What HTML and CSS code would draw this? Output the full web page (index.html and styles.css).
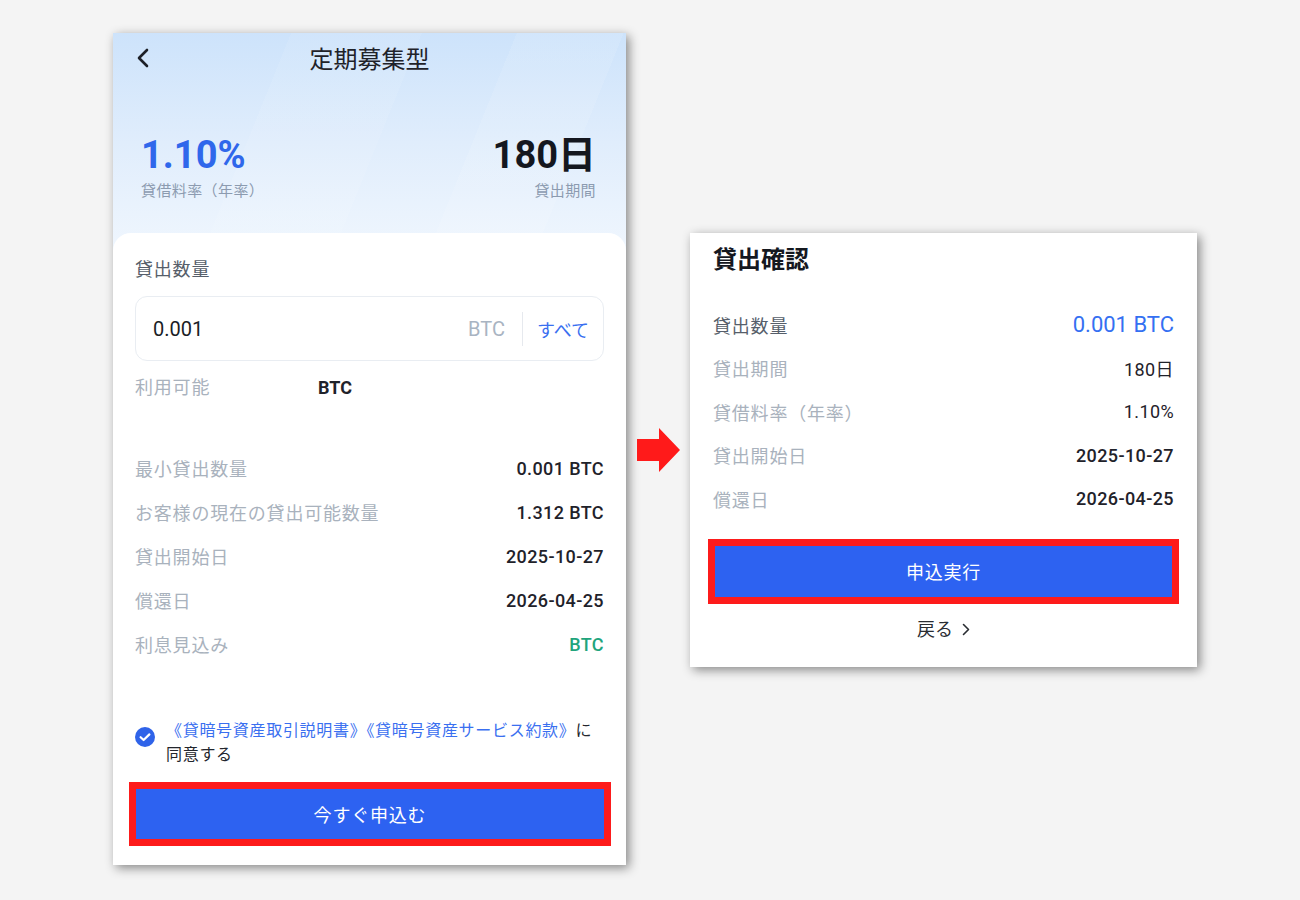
FILE: index.html
```html
<!DOCTYPE html>
<html lang="ja">
  <head>
    <meta charset="UTF-8" />
    <meta name="viewport" content="width=device-width, initial-scale=1.0" />
    <title>定期募集型</title>
    <link rel="stylesheet" href="styles.css">
  </head>
  <body>
    <div class="stage">
      <section class="phone">
        <header class="phone-head">
          <div class="nav">
            <svg class="back" width="12" height="20" viewBox="0 0 12 20">
              <polyline points="10,2 2,10 10,18" fill="none" stroke="#1d2027" stroke-width="2.6" stroke-linecap="round" stroke-linejoin="round" />
            </svg>
            <h1 class="nav-title">定期募集型</h1>
            <span></span>
          </div>
          <div class="stats">
            <div class="stat">
              <div class="stat-value rate">1.10%</div>
              <div class="stat-label">貸借料率（年率）</div>
            </div>
            <div class="stat stat-right">
              <div class="stat-value">180日</div>
              <div class="stat-label">貸出期間</div>
            </div>
          </div>
        </header>

        <div class="sheet">
          <div class="field-label">貸出数量</div>
          <div class="amount-box">
            <span class="amount">0.001</span>
            <span class="unit">BTC</span>
            <span class="divider"></span>
            <span class="all">すべて</span>
          </div>
          <div class="avail">
            <span class="avail-label">利用可能</span>
            <span class="avail-value">BTC</span>
          </div>

          <dl class="details">
            <div class="row"><dt>最小貸出数量</dt><dd>0.001 BTC</dd></div>
            <div class="row"><dt>お客様の現在の貸出可能数量</dt><dd>1.312 BTC</dd></div>
            <div class="row"><dt>貸出開始日</dt><dd>2025-10-27</dd></div>
            <div class="row"><dt>償還日</dt><dd>2026-04-25</dd></div>
            <div class="row"><dt>利息見込み</dt><dd class="green">BTC</dd></div>
          </dl>

          <div class="agree">
            <svg class="check" width="20" height="20" viewBox="0 0 20 20">
              <circle cx="10" cy="10" r="10" fill="#2f63e9" />
              <polyline points="5.6,10.2 8.6,13 14.4,7.4" fill="none" stroke="#fff" stroke-width="2.2" stroke-linecap="round" stroke-linejoin="round" />
            </svg>
            <p class="agree-text"><span class="link">《貸暗号資産取引説明書》《貸暗号資産サービス約款》</span>に<br>同意する</p>
          </div>

          <div class="mark mark-left">
            <button class="primary">今すぐ申込む</button>
          </div>
        </div>
      </section>

      <svg class="arrow" width="44" height="44" viewBox="0 0 44 44">
        <polygon points="0,11 22,11 22,0 43,22 22,44 22,33 0,33" fill="#ff1a1a" />
      </svg>

      <section class="confirm">
        <h2 class="confirm-title">貸出確認</h2>
        <dl class="details confirm-details">
          <div class="row"><dt class="dark">貸出数量</dt><dd class="blue">0.001 BTC</dd></div>
          <div class="row"><dt>貸出期間</dt><dd class="regular">180日</dd></div>
          <div class="row"><dt>貸借料率（年率）</dt><dd class="regular">1.10%</dd></div>
          <div class="row"><dt>貸出開始日</dt><dd>2025-10-27</dd></div>
          <div class="row"><dt>償還日</dt><dd>2026-04-25</dd></div>
        </dl>
        <div class="mark mark-right">
          <button class="primary">申込実行</button>
        </div>
        <div class="go-back">
          戻る
          <svg width="8" height="13" viewBox="0 0 8 13">
            <polyline points="1.5,1.5 6.5,6.5 1.5,11.5" fill="none" stroke="#2a2d33" stroke-width="1.6" stroke-linecap="round" stroke-linejoin="round" />
          </svg>
        </div>
      </section>
    </div>
  </body>
</html>
```

FILE: styles.css
```css
body {
  margin: 0;
  background: #f4f4f4;
  font-family: Roboto, "Noto Sans CJK JP", sans-serif;
  color: #1f222a;
}
.stage {
  display: flex;
  align-items: flex-start;
  padding: 33px 0 0 113px;
  height: 867px;
}

/* phone screen */
.phone {
  width: 513px;
  background: linear-gradient(180deg, #cde3fb 0px, #e0edfc 110px, #f1f7fe 230px, #f4f8fe 260px);
  box-shadow: 3px 3px 10px rgba(0, 0, 0, 0.45);
}
.phone-head {
  height: 200px;
  box-sizing: border-box;
  background:
    linear-gradient(112deg, transparent 30%, rgba(255, 255, 255, 0.08) 30%, rgba(255, 255, 255, 0.08) 52%, transparent 52%),
    linear-gradient(112deg, transparent 68%, rgba(255, 255, 255, 0.1) 68%, rgba(255, 255, 255, 0.1) 86%, transparent 86%);
}
.nav {
  display: grid;
  grid-template-columns: 1fr auto 1fr;
  align-items: center;
  height: 54px;
  padding-left: 24px;
  padding-right: 24px;
}
.back {
  margin-top: -4px;
}
.nav-title {
  margin: 0;
  font-size: 24px;
  font-weight: 400;
  line-height: 32px;
  color: #1f2229;
}
.stats {
  display: flex;
  justify-content: space-between;
  padding: 46px 30px 0 28px;
}
.stat-right {
  text-align: right;
}
.stat-value {
  font-size: 38px;
  font-weight: 700;
  line-height: 44px;
  color: #14171f;
}
.stat-value.rate {
  color: #2f67eb;
}
.stat-label {
  margin-top: 3px;
  font-size: 15px;
  line-height: 22px;
  letter-spacing: 0.4px;
  color: #8c9bb0;
}

/* white sheet */
.sheet {
  background: #fff;
  border-radius: 18px 18px 0 0;
  padding: 24px 22px 19px;
}
.field-label {
  font-size: 18px;
  line-height: 26px;
  letter-spacing: 0.8px;
  color: #565e6a;
}
.amount-box {
  display: flex;
  align-items: center;
  height: 65px;
  box-sizing: border-box;
  margin-top: 13px;
  padding: 0 14px 0 17px;
  border: 1px solid #e9edf2;
  border-radius: 12px;
}
.amount {
  flex: 1;
  font-size: 20px;
  color: #1a1d26;
}
.unit {
  font-size: 20px;
  color: #a9b4c2;
  margin-right: 17px;
}
.divider {
  width: 1px;
  height: 34px;
  background: #e6e9ee;
}
.all {
  margin-left: 14px;
  font-size: 18px;
  color: #3a6ff0;
}
.avail {
  display: flex;
  margin-top: 14px;
  line-height: 26px;
}
.avail-label {
  width: 183px;
  font-size: 18px;
  letter-spacing: 0.8px;
  color: #a9b2bd;
}
.avail-value {
  font-size: 18px;
  font-weight: 700;
}

.details {
  margin: 45px 0 0;
}
.row {
  display: flex;
  justify-content: space-between;
  align-items: center;
  height: 44px;
}
.row dt {
  font-size: 18px;
  letter-spacing: 0.8px;
  color: #a9b2bd;
}
.row dt.dark {
  color: #565e6a;
}
.row dd {
  margin: 0;
  font-size: 18px;
  font-weight: 500;
  letter-spacing: 0.4px;
  color: #1f222a;
}
.row dd.green {
  color: #21a47c;
}
.row dd.regular {
  font-weight: 400;
}
.row dd.blue {
  font-size: 22px;
  font-weight: 400;
  letter-spacing: 0;
  color: #3470f2;
}

.agree {
  display: flex;
  gap: 11px;
  margin-top: 53px;
}
.check {
  flex: none;
  margin-top: 8px;
}
.agree-text {
  margin: 0;
  font-size: 16px;
  line-height: 24px;
  letter-spacing: 0.7px;
  color: #23262d;
}
.link {
  color: #3a6ff0;
}

/* red highlight round a button */
.mark {
  border: 7px solid #fd1b1b;
}
.mark-left {
  margin: 15px -7px 0 -6px;
}
.mark-right {
  margin: 18px -5px 0;
}
.primary {
  display: block;
  width: 100%;
  height: 50px;
  border: none;
  background: #2d62f1;
  color: #fff;
  font-family: Roboto, "Noto Sans CJK JP", sans-serif;
  font-size: 18px;
  letter-spacing: 0.8px;
}
.mark-right .primary {
  height: 51px;
}

.arrow {
  margin: 395px 0 0 11px;
}

/* confirm dialog */
.confirm {
  width: 507px;
  box-sizing: border-box;
  margin: 200px 0 0 9px;
  padding: 11px 23px 24px;
  background: #fff;
  box-shadow: 3px 3px 10px rgba(0, 0, 0, 0.45);
}
.confirm-title {
  margin: 0;
  font-size: 24px;
  font-weight: 700;
  line-height: 32px;
  color: #15181f;
}
.confirm-details {
  margin-top: 27px;
}
.confirm-details .row {
  height: 43.5px;
}
.go-back {
  display: flex;
  justify-content: center;
  align-items: center;
  gap: 9px;
  margin-top: 13px;
  font-size: 18px;
  line-height: 26px;
  color: #2a2d33;
}
```
